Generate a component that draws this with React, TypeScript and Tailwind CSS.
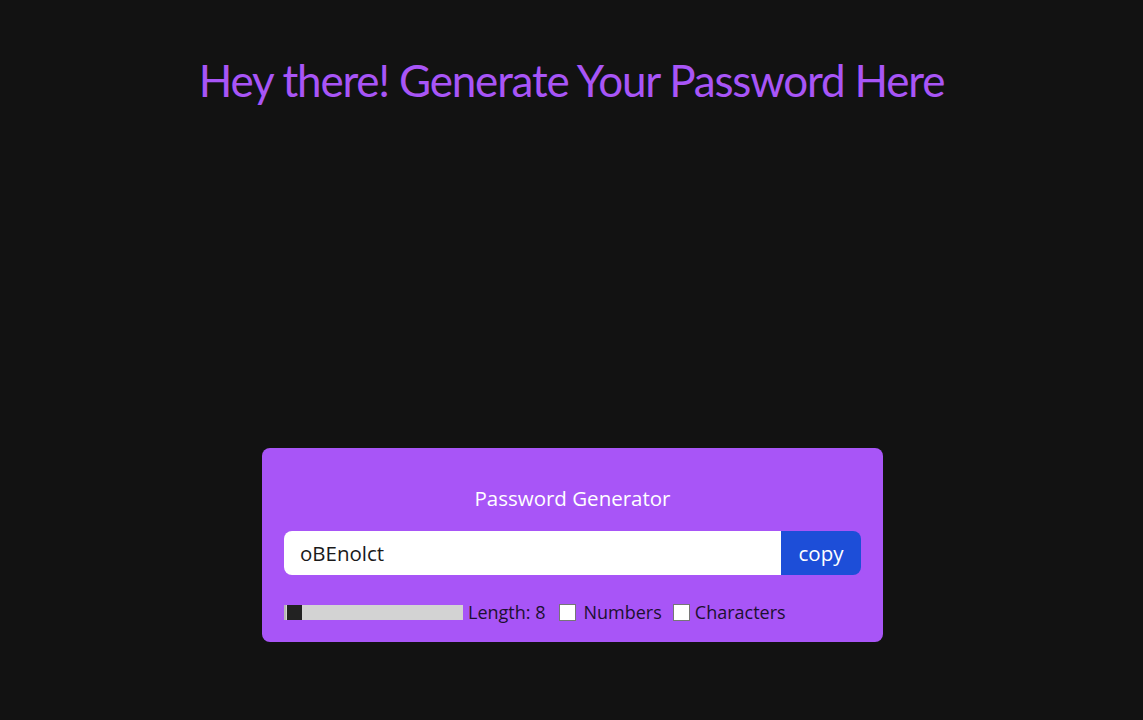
import React, { useState } from 'react';

const App = () => {
  const [length] = useState(8);
  const [password] = useState('oBEnolct');
  const [numbers, setNumbers] = useState(false);
  const [chars, setChars] = useState(false);

  return (
    <div
      className="w-full min-h-screen bg-[#121212] flex flex-col items-center"
      style={{ fontFamily: '"Open Sans", "Noto Sans", sans-serif' }}
    >
      <h1
        className="mt-[52px] text-[44px] leading-[56px] tracking-[-1.2px] text-[#a855f7]"
        style={{ fontFamily: 'Lato, "Open Sans", sans-serif' }}
      >
        Hey there! Generate Your Password Here
      </h1>

      <div className="mt-[340px] ml-[2px] w-[621px] rounded-lg bg-[#a855f7] px-[22px] pt-[36px] pb-[20px]">
        <div className="h-[28px] text-center text-[20.5px] leading-[28px] text-white">
          Password Generator
        </div>

        <div className="mt-[19px] flex h-[44px] overflow-hidden rounded-lg">
          <input
            type="text"
            value={password}
            readOnly
            className="flex-1 bg-white px-4 text-[20.5px] text-[#1a1a1a] outline-none"
          />
          <button className="w-[80px] bg-[#1d4ed8] text-[20.5px] text-white">
            copy
          </button>
        </div>

        <div className="mt-[27px] flex h-[20px] items-center text-[18px] text-[#1c1030]">
          <div className="flex h-[15px] w-[179px] bg-[#d3d3d3] border-l-2 border-[#b8b8b8]">
            <div className="ml-[1px] h-full w-[15px] bg-[#222222]" />
          </div>
          <span className="ml-[5px]">Length: {length}</span>
          <label className="ml-[14px] flex items-center">
            <span
              onClick={() => setNumbers(!numbers)}
              className="h-[17px] w-[17px] border border-[#767676] bg-white"
            />
            <span className="ml-[7px]">Numbers</span>
          </label>
          <label className="ml-[11px] flex items-center">
            <span
              onClick={() => setChars(!chars)}
              className="h-[17px] w-[17px] border border-[#767676] bg-white"
            />
            <span className="ml-[5px]">Characters</span>
          </label>
        </div>
      </div>
    </div>
  );
};

export default App;
